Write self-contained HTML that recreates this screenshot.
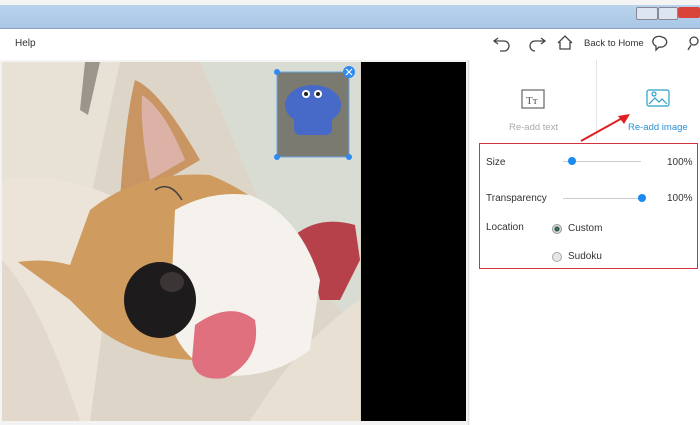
<!DOCTYPE html>
<html><head><style>
body{margin:0;width:700px;height:425px;overflow:hidden;background:#fff;font-family:"Liberation Sans",sans-serif;position:relative}
.t{position:absolute;font-size:10px;color:#333;white-space:nowrap}
</style></head><body>
<div style="position:absolute;left:0;top:0;width:700px;height:5px;background:#f4f4f4"></div>
<div style="position:absolute;left:0;top:5px;width:700px;height:23px;background:linear-gradient(#b9d3ec,#a9c7e6);border-bottom:1px solid #8aa4c0"></div>
<div style="position:absolute;left:636px;top:7px;width:20px;height:11px;border:1px solid #889;border-radius:2px;background:#dde6f0"></div>
<div style="position:absolute;left:658px;top:7px;width:18px;height:11px;border:1px solid #889;border-radius:2px;background:#dde6f0"></div>
<div style="position:absolute;left:678px;top:7px;width:22px;height:11px;background:#d9443a;border-radius:2px"></div>
<div class="t" style="left:15px;top:38px;font-size:10px">Help</div>
<svg style="position:absolute;left:490px;top:33px" width="210" height="20" viewBox="0 0 210 20" fill="none" stroke="#444" stroke-width="1.3">
<path d="M8 5 L4 8 L8 11 M4 8 H14 a5 5 0 0 1 0 10 H10"/>
<path d="M51 5 L55 8 L51 11 M55 8 H45 a5 5 0 0 0 0 10"/>
<path d="M68 10 L75 3 L82 10 M70 9 V16 H80 V9"/>
<path d="M172 4 a6 5 0 1 1 -3 10 l-3 3 v-4 a6 5 0 0 1 6 -9z"/>
<circle cx="204" cy="8" r="4"/><path d="M201 12 l-3 5"/>
</svg>
<div class="t" style="left:584px;top:38px;font-size:9.5px">Back to Home</div>
<svg style="position:absolute;left:0;top:60px" width="470" height="365" viewBox="0 60 470 365">
<rect x="0" y="60" width="470" height="365" fill="#f3f3f3"/>
<rect x="2" y="62" width="359" height="359" fill="#ddd6c8"/>
<path d="M2 62 H120 L90 200 L2 230Z" fill="#e8e2d6"/>
<path d="M85 62 L100 62 L88 115 L80 110Z" fill="#9a968c"/>
<path d="M200 62 H360 V330 L280 250Z" fill="#d9dcd3"/>
<path d="M2 180 Q60 170 120 200 L90 421 H2Z" fill="#ece4d8"/>
<path d="M2 260 Q40 300 80 421 H2Z" fill="#e2d9cc"/>
<path d="M250 421 Q300 340 360 300 V421Z" fill="#e8e0d3"/>
<path d="M295 235 Q320 215 355 225 L360 260 L340 300 L320 300 L310 260Z" fill="#b6414a"/>
<path d="M135 80 Q160 90 200 160 Q150 190 120 200 Q125 120 135 80Z" fill="#c89563"/>
<path d="M142 95 Q165 110 185 160 L150 180 Q140 130 142 95Z" fill="#dcb2a6"/>
<path d="M18 262 Q45 258 70 265 L90 210 Q140 170 210 175 Q260 195 300 240 L290 330 Q240 370 200 360 Q140 360 100 330 L70 300Z" fill="#cf9b5e"/>
<path d="M175 210 Q210 190 250 195 Q300 215 320 280 L310 350 Q270 380 220 375 Q180 360 170 320Z" fill="#f5f2ee"/>
<ellipse cx="160" cy="300" rx="36" ry="38" fill="#1e1b1c"/>
<ellipse cx="172" cy="282" rx="12" ry="10" fill="#3b3536"/>
<path d="M195 325 Q230 300 255 320 Q262 360 225 378 Q195 382 192 360Z" fill="#e0707e"/>
<path d="M155 190 Q170 180 182 200" stroke="#444" stroke-width="1.5" fill="none"/>
<rect x="361" y="62" width="105" height="359" fill="#000"/>
<rect x="277" y="72" width="72" height="85" fill="#7b7a70" stroke="#6aa6e8" stroke-width="1"/>
<ellipse cx="313" cy="105" rx="28" ry="20" fill="#4769c8"/>
<rect x="294" y="105" width="38" height="30" rx="6" fill="#4769c8"/>
<circle cx="306" cy="94" r="4" fill="#fff"/><circle cx="318" cy="94" r="4" fill="#fff"/>
<circle cx="306" cy="94" r="2" fill="#222"/><circle cx="318" cy="94" r="2" fill="#222"/>
<g fill="#2f8bee"><circle cx="277" cy="72" r="3"/><circle cx="277" cy="157" r="3"/><circle cx="349" cy="157" r="3"/><circle cx="349" cy="72" r="6"/></g>
<path d="M346 69 l6 6 M352 69 l-6 6" stroke="#fff" stroke-width="1.2"/>
</svg>
<div style="position:absolute;left:468px;top:60px;width:1px;height:365px;background:#ddd"></div>
<div style="position:absolute;left:596px;top:60px;width:1px;height:80px;background:#e4e4e4"></div>
<svg style="position:absolute;left:520px;top:88px" width="28" height="24" fill="none" stroke="#666" stroke-width="1.2"><rect x="2" y="2" width="22" height="18"/><text x="6" y="16" font-size="11" fill="#555" stroke="none" font-family="Liberation Serif">Tт</text></svg>
<div class="t" style="left:509px;top:122px;color:#aaa;font-size:9.5px">Re-add text</div>
<svg style="position:absolute;left:644px;top:88px" width="28" height="22" fill="none" stroke="#2a9fc7" stroke-width="1.2"><rect x="3" y="2" width="22" height="16" rx="2"/><path d="M5 16 l6-6 4 4 3-3 5 5"/><circle cx="10" cy="6" r="2"/></svg>
<div class="t" style="left:628px;top:122px;color:#2e8fd6;font-size:9.5px">Re-add image</div>
<svg style="position:absolute;left:578px;top:110px" width="60" height="35"><path d="M3 31 L48 6" stroke="#e02020" stroke-width="2"/><path d="M52 4 L40 6 L46 14Z" fill="#e02020"/></svg>
<div style="position:absolute;left:479px;top:143px;width:217px;height:124px;border:1.5px solid #d0343a"></div>
<div class="t" style="left:486px;top:157px">Size</div>
<div style="position:absolute;left:563px;top:161px;width:78px;height:1px;background:#ccc"></div>
<div style="position:absolute;left:568px;top:157px;width:8px;height:8px;border-radius:50%;background:#1a8af0"></div>
<div class="t" style="left:667px;top:157px">100%</div>
<div class="t" style="left:486px;top:193px">Transparency</div>
<div style="position:absolute;left:563px;top:198px;width:80px;height:1px;background:#ccc"></div>
<div style="position:absolute;left:638px;top:194px;width:8px;height:8px;border-radius:50%;background:#1a8af0"></div>
<div class="t" style="left:667px;top:193px">100%</div>
<div class="t" style="left:486px;top:222px">Location</div>
<div style="position:absolute;left:552px;top:224px;width:8px;height:8px;border-radius:50%;border:1px solid #999;background:radial-gradient(#2a4 0,#345 2px,#ddd 3px)"></div>
<div class="t" style="left:568px;top:223px">Custom</div>
<div style="position:absolute;left:552px;top:252px;width:8px;height:8px;border-radius:50%;border:1px solid #aaa;background:#e6e6e6"></div>
<div class="t" style="left:568px;top:251px">Sudoku</div>
</body></html>
